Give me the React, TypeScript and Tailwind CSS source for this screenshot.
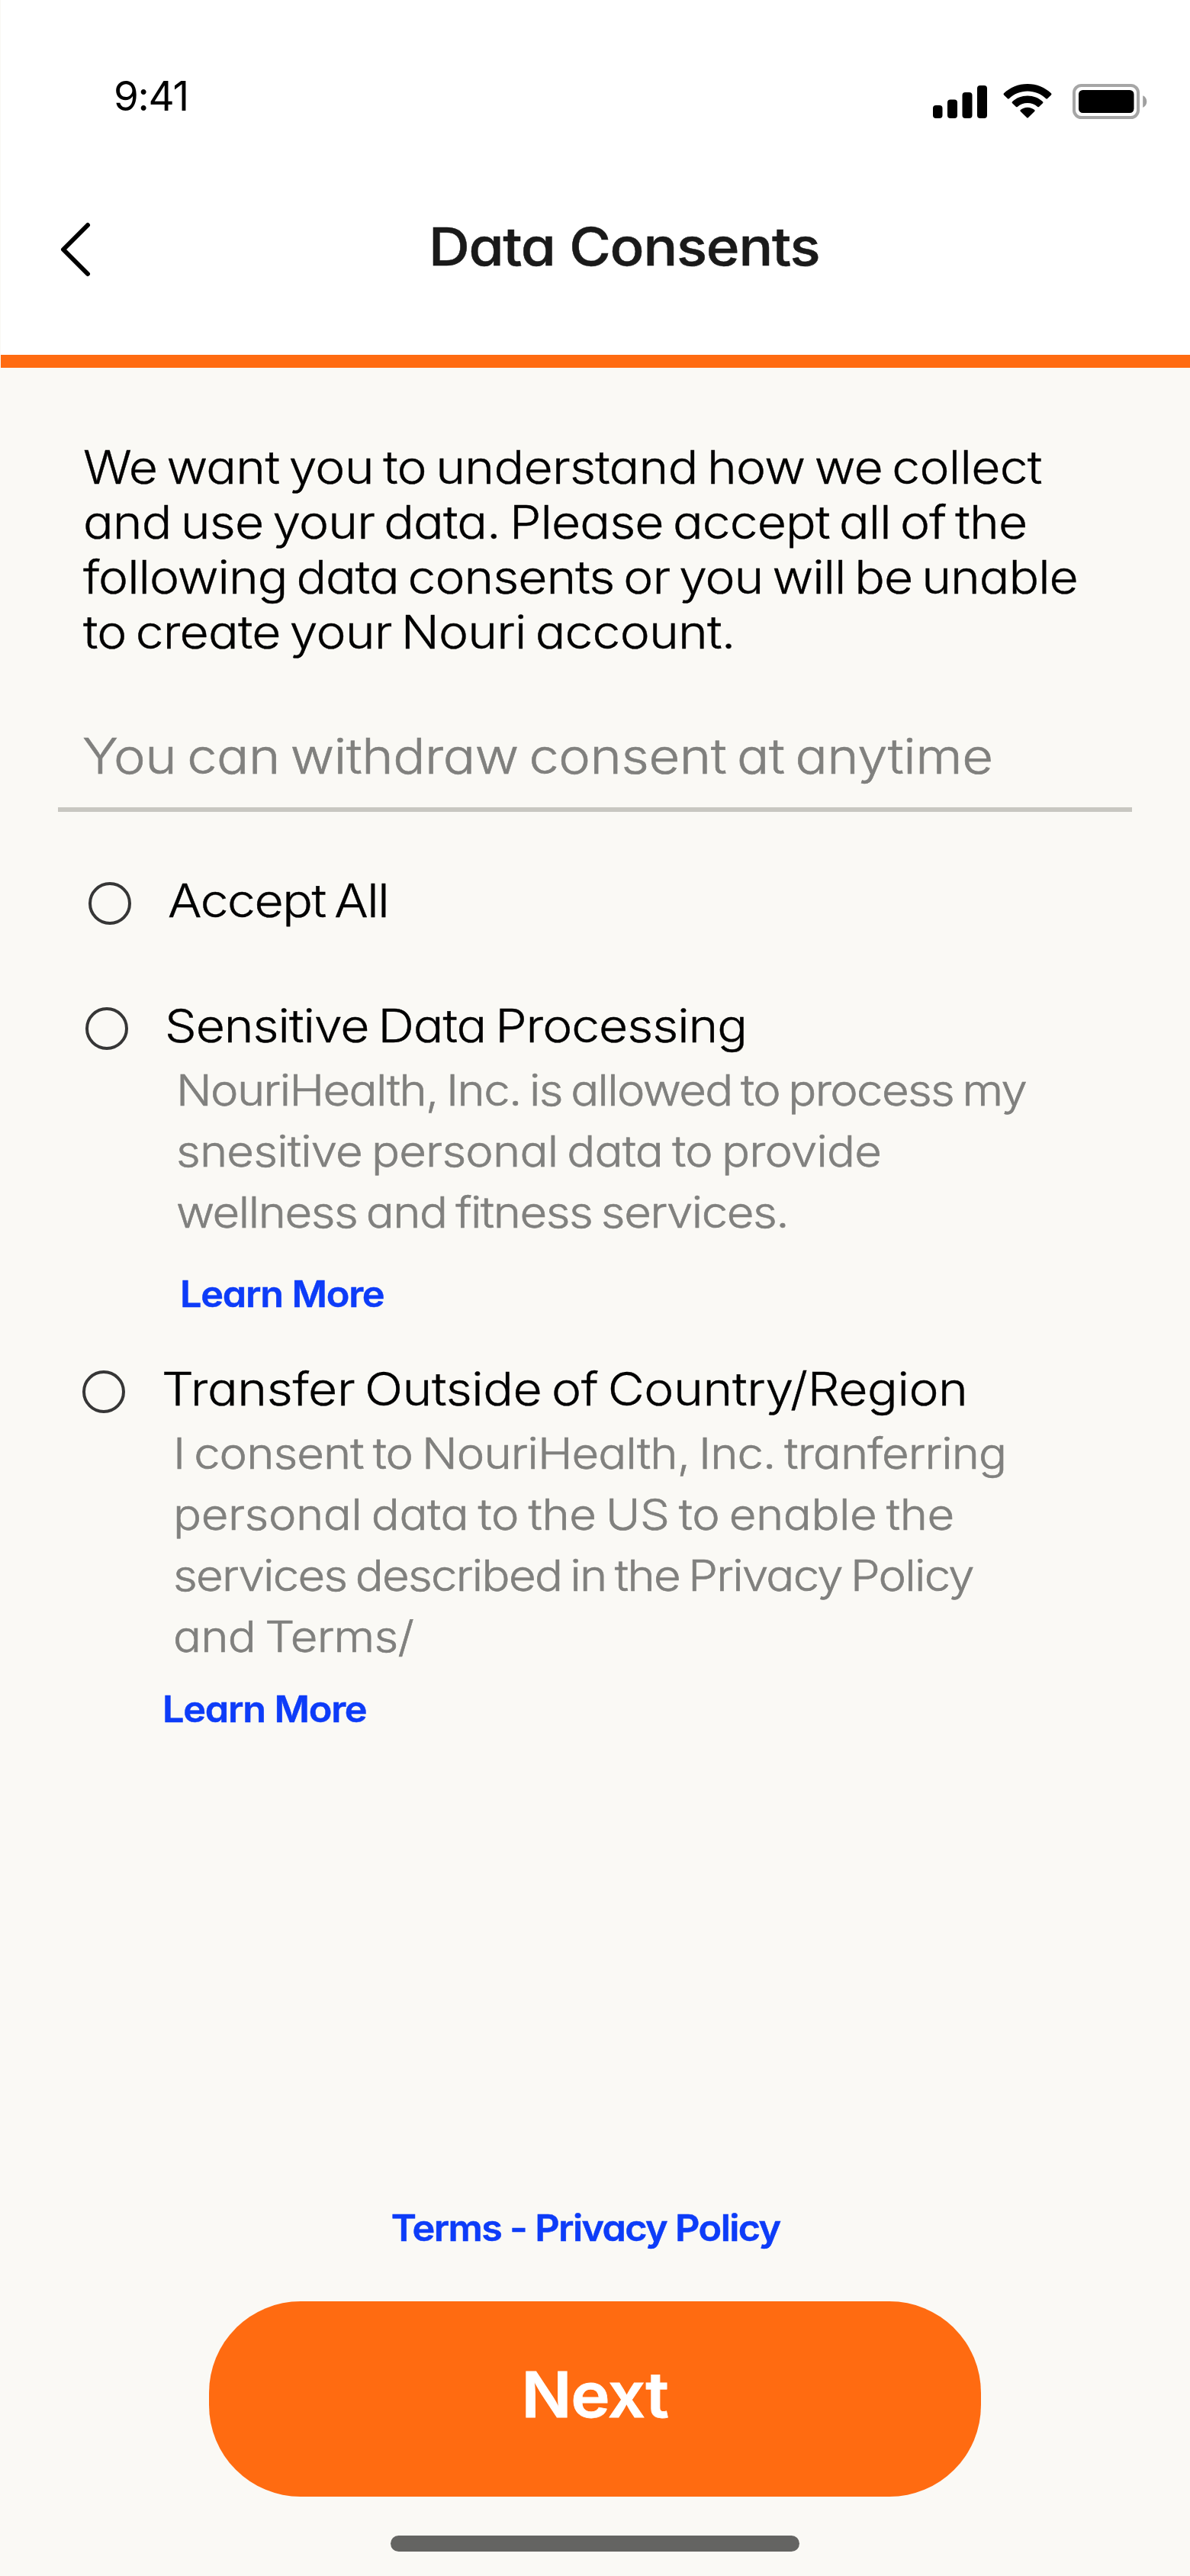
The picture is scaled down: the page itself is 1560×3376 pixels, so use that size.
import type { ReactNode } from "react";

type Line = { text: string; tracking: string };

function Lines({ items }: { items: Line[] }) {
  return (
    <>
      {items.map((item) => (
        <span key={item.text} className={`block origin-left scale-x-110 whitespace-nowrap ${item.tracking}`}>
          {item.text}
        </span>
      ))}
    </>
  );
}

function SignalIcon() {
  return (
    <svg width="71" height="43" viewBox="0 0 71 43" fill="#000">
      <rect x="0" y="26" width="12.5" height="17" rx="4" />
      <rect x="19" y="18.5" width="13" height="24.5" rx="4" />
      <rect x="38.5" y="9" width="13" height="34" rx="4" />
      <rect x="58" y="0" width="13" height="43" rx="4" />
    </svg>
  );
}

function WifiIcon() {
  return (
    <svg width="64" height="45" viewBox="0 0 64 45" fill="#000">
      <path d="M32 0C44 0 55 4.6 63 12.3Q64 13.4 63 14.5L58 19.3Q57.2 20 56.2 19.2C49.5 13 41 9.6 32 9.6S14.5 13 7.8 19.2Q6.8 20 6 19.3L1 14.5Q0 13.4 1 12.3C9 4.6 20 0 32 0Z" />
      <path d="M32 15.5C39.7 15.5 46.6 18.3 52 23.2Q53 24.2 52 25.2L47 30Q46.2 30.7 45.2 30C41.5 26.8 37 25 32 25S22.5 26.8 18.8 30Q17.8 30.7 17 30L12 25.2Q11 24.2 12 23.2C17.4 18.3 24.3 15.5 32 15.5Z" />
      <path d="M32 30.7C35.5 30.7 38.7 32 41.2 33.9Q42.2 34.9 41.2 35.9L33 44Q32 45 31 44L22.8 35.9Q21.8 34.9 22.8 33.9C25.3 32 28.5 30.7 32 30.7Z" />
    </svg>
  );
}

function BatteryIcon() {
  return (
    <svg width="98" height="46" viewBox="0 0 98 46">
      <rect x="2" y="2" width="84" height="42" rx="9.5" fill="none" stroke="#a6a6a6" strokeWidth="4" />
      <rect x="8" y="8" width="72.5" height="30" rx="5.5" fill="#000" />
      <path d="M92.2 15.2C99 18 99 28.2 92.2 31Z" fill="#a0a0a0" />
    </svg>
  );
}

function Radio() {
  return <span className="mt-3 block size-14 shrink-0 rounded-full border-4 border-[#363636]" />;
}

function LearnMore({ className }: { className: string }) {
  return (
    <a className={`block origin-left scale-x-105 text-[48px] leading-[60px] font-semibold tracking-[-1.17px] text-[#0d3cf8] [-webkit-text-stroke:0.5px] ${className}`}>
      Learn More
    </a>
  );
}

function Option({ className, labelClass, label, children }: {
  className: string;
  labelClass: string;
  label: string;
  children?: ReactNode;
}) {
  return (
    <section className={`flex items-start gap-12 ${className}`}>
      <Radio />
      <div>
        <h2 className={`origin-left scale-x-110 text-[60px] leading-[72px] font-light whitespace-nowrap text-black [word-spacing:-5px] [-webkit-text-stroke:0.4px] ${labelClass}`}>
          {label}
        </h2>
        {children}
      </div>
    </section>
  );
}

const intro: Line[] = [
  { text: "We want you to understand how we collect", tracking: "tracking-[-0.68px]" },
  { text: "and use your data. Please accept all of the", tracking: "tracking-[-0.81px]" },
  { text: "following data consents or you will be unable", tracking: "tracking-[-0.95px]" },
  { text: "to create your Nouri account.", tracking: "tracking-[-0.77px]" },
];

const sensitive: Line[] = [
  { text: "NouriHealth, Inc. is allowed to process my", tracking: "tracking-[-1.5px]" },
  { text: "snesitive personal data to provide", tracking: "tracking-[-0.76px]" },
  { text: "wellness and fitness services.", tracking: "tracking-[-1.34px]" },
];

const transfer: Line[] = [
  { text: "I consent to NouriHealth, Inc. tranferring", tracking: "tracking-[-0.88px]" },
  { text: "personal data to the US to enable the", tracking: "tracking-[-0.41px]" },
  { text: "services described in the Privacy Policy", tracking: "tracking-[-1.56px]" },
  { text: "and Terms/", tracking: "tracking-[-0.72px]" },
];

export default function App() {
  return (
    <div className="flex h-[3376px] w-[1560px] flex-col overflow-hidden bg-[#faf9f5] font-['Inter',sans-serif] [font-feature-settings:'cv11']">
      <header className="ml-px flex h-[482px] flex-col border-b-[17px] border-[#ff6b11] bg-white">
        <div className="flex items-start justify-between pt-[94px] pr-[56px] pl-[148px]">
          <span className="text-[53px] leading-[64px] tracking-[-1.3px] text-black">9:41</span>
          <div className="flex pt-4">
            <div className="mt-0.5 mr-[21px]"><SignalIcon /></div>
            <div className="mr-[27px]"><WifiIcon /></div>
            <BatteryIcon />
          </div>
        </div>
        <div className="mt-[123px] flex items-start pl-[77px]">
          <button className="mt-2.5 block" aria-label="Back">
            <svg width="44" height="72" viewBox="0 0 44 72" fill="none" stroke="#000" strokeWidth="6" strokeLinecap="round" strokeLinejoin="round">
              <path d="M37 4L5 36L37 68" />
            </svg>
          </button>
          <h1 className="ml-[440px] origin-left scale-x-[1.08] text-[69px] leading-[84px] font-medium tracking-[-1.15px] whitespace-nowrap text-[#1a1a1a] [-webkit-text-stroke:0.5px]">
            Data Consents
          </h1>
        </div>
      </header>

      <main className="flex flex-col">
        <p className="mt-[94px] ml-[109px] text-[60px] leading-[72px] font-light text-black [word-spacing:-5px] [-webkit-text-stroke:0.4px]">
          <Lines items={intro} />
        </p>
        <div className="mx-[76px] mt-[87px] border-b-[6px] border-[#c8c7c1] pb-[27px] pl-[32px]">
          <p className="origin-left scale-x-110 text-[64px] leading-[80px] font-light tracking-[-0.42px] whitespace-nowrap text-[#80807e] [word-spacing:-5px] [-webkit-text-stroke:0.6px]">
            You can withdraw consent at anytime
          </p>
        </div>

        <Option className="mt-20 pl-[116px]" labelClass="tracking-[-1.34px]" label="Accept All" />

        <Option className="mt-[92px] pl-[112px]" labelClass="tracking-[-0.97px]" label="Sensitive Data Processing">
          <p className="mt-[9px] ml-[15px] text-[56px] leading-[80px] font-light text-[#80807e] [word-spacing:-4px] [-webkit-text-stroke:0.6px]">
            <Lines items={sensitive} />
          </p>
          <LearnMore className="mt-[37px] ml-5" />
        </Option>

        <Option className="mt-[58px] pl-[108px]" labelClass="tracking-[-0.38px]" label="Transfer Outside of Country/Region">
          <p className="mt-[9px] ml-[15px] text-[56px] leading-[80px] font-light text-[#80807e] [word-spacing:-4px] [-webkit-text-stroke:0.6px]">
            <Lines items={transfer} />
          </p>
          <LearnMore className="mt-[25px] ml-px" />
        </Option>
      </main>

      <footer className="mt-auto flex flex-col items-center pb-8">
        <a className="mr-[24px] scale-x-105 text-[48px] leading-[60px] font-semibold tracking-[-1.57px] whitespace-nowrap text-[#0d3cf8] [-webkit-text-stroke:0.5px]">
          Terms - Privacy Policy
        </a>
        <button className="mt-[66px] flex h-64 w-[1012px] items-center justify-center rounded-[120px] bg-[#ff6b11] pb-2.5 text-[82px] leading-none font-semibold tracking-[-1.18px] text-white">
          <span className="block scale-x-[1.06] [-webkit-text-stroke:0.8px]">Next</span>
        </button>
        <div className="mt-[51px] h-[21px] w-[536px] rounded-full bg-[#646462]" />
      </footer>
    </div>
  );
}
